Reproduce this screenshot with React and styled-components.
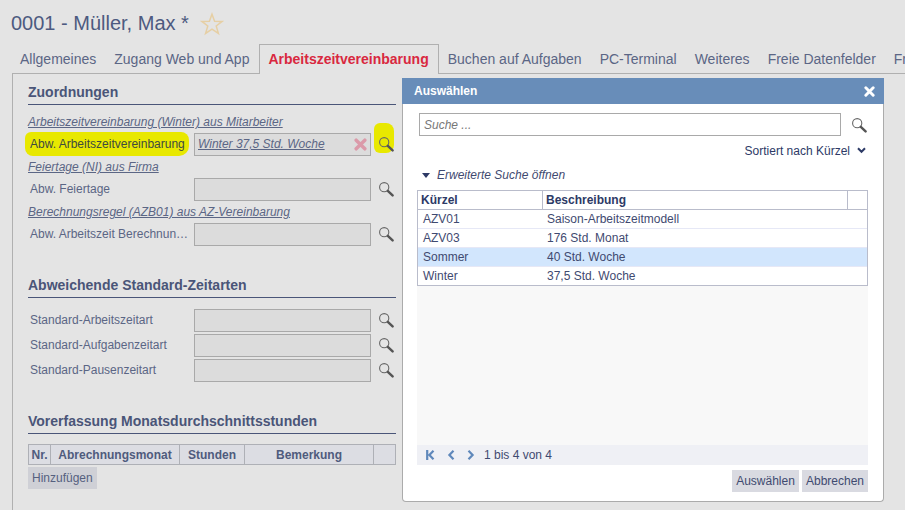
import styled, { createGlobalStyle } from "styled-components";

const tabs = [
  "Allgemeines",
  "Zugang Web und App",
  "Arbeitszeitvereinbarung",
  "Buchen auf Aufgaben",
  "PC-Terminal",
  "Weiteres",
  "Freie Datenfelder",
  "Freie Felder",
];

const results = [
  ["AZV01", "Saison-Arbeitszeitmodell"],
  ["AZV03", "176 Std. Monat"],
  ["Sommer", "40 Std. Woche"],
  ["Winter", "37,5 Std. Woche"],
];

const SearchIcon = () => (
  <svg width="16" height="16" viewBox="0 0 16 16">
    <circle cx="6.2" cy="6.2" r="4.6" fill="none" stroke="#666" strokeWidth="1.1" />
    <path d="M9.8 9.8 L14.6 14.4" stroke="#555" strokeWidth="2.4" strokeLinecap="round" />
  </svg>
);

const Cross = ({ color, size }) => (
  <svg width={size} height={size} viewBox="0 0 12 12">
    <path d="M2 2 L10 10 M10 2 L2 10" stroke={color} strokeWidth="3.2" strokeLinecap="round" />
  </svg>
);

const Chevron = ({ d, width = 8 }) => (
  <svg width={width} height="10" viewBox={`0 0 ${width} 10`}>
    <path d={d} fill="none" stroke="#5f88bb" strokeWidth="2.2" />
  </svg>
);

const Field = ({ label, highlight, value }) => (
  <Row>
    <Label $highlight={highlight}>
      {highlight && <LabelMark />}
      <LabelText>{label}</LabelText>
    </Label>
    <Input>
      {value && <InputValue>{value}</InputValue>}
      {value && <Cross color="#db9aa9" size={13} />}
    </Input>
    <Lookup>
      {highlight && <LookupMark />}
      <LookupIcon>
        <SearchIcon />
      </LookupIcon>
    </Lookup>
  </Row>
);

export default function App() {
  return (
    <>
      <GlobalStyle />
      <Page>
        <TitleRow>
          <Title>0001 - Müller, Max *</Title>
          <svg width="24" height="24" viewBox="0 0 24 24">
            <path
              d="M12 2.2 L14.6 9.2 L22.2 9.4 L16.2 14 L18.4 21.4 L12 17.1 L5.6 21.4 L7.8 14 L1.8 9.4 L9.4 9.2 Z"
              fill="none"
              stroke="#e6cfa4"
              strokeWidth="1.5"
            />
          </svg>
        </TitleRow>
        <Tabs>
          {tabs.map((tab, i) => (
            <Tab key={tab} $active={i === 2}>
              {tab}
            </Tab>
          ))}
        </Tabs>
        <Panel>
          <Section>
            <Heading>Zuordnungen</Heading>
            <Hint>Arbeitszeitvereinbarung (Winter) aus Mitarbeiter</Hint>
            <Field label="Abw. Arbeitszeitvereinbarung" highlight value="Winter 37,5 Std. Woche" />
            <Hint>Feiertage (NI) aus Firma</Hint>
            <Field label="Abw. Feiertage" />
            <Hint>Berechnungsregel (AZB01) aus AZ-Vereinbarung</Hint>
            <Field label="Abw. Arbeitszeit Berechnungsregel" />
          </Section>
          <Section>
            <Heading>Abweichende Standard-Zeitarten</Heading>
            <Rows>
              <Field label="Standard-Arbeitszeitart" />
              <Field label="Standard-Aufgabenzeitart" />
              <Field label="Standard-Pausenzeitart" />
            </Rows>
          </Section>
          <Section>
            <Heading>Vorerfassung Monatsdurchschnittsstunden</Heading>
            <MiniTable>
              <MiniHead>Nr.</MiniHead>
              <MiniHead>Abrechnungsmonat</MiniHead>
              <MiniHead>Stunden</MiniHead>
              <MiniHead>Bemerkung</MiniHead>
              <MiniHead />
            </MiniTable>
            <GreyButton>Hinzufügen</GreyButton>
          </Section>
        </Panel>

        <Dialog>
          <DialogHeader>
            <span>Auswählen</span>
            <Cross color="#fff" size={11} />
          </DialogHeader>
          <DialogBody>
            <SearchRow>
              <SearchBox>Suche ...</SearchBox>
              <SearchIcon />
            </SearchRow>
            <SortRow>
              Sortiert nach Kürzel
              <svg width="9" height="7" viewBox="0 0 9 7">
                <path d="M1 1.2 L4.5 4.8 L8 1.2" fill="none" stroke="#2d3a66" strokeWidth="2" />
              </svg>
            </SortRow>
            <ExpandRow>
              <Triangle />
              Erweiterte Suche öffnen
            </ExpandRow>
            <Results>
              <ResultHead>
                <ResultTitle>Kürzel</ResultTitle>
                <ResultTitle>Beschreibung</ResultTitle>
                <ResultTitle />
              </ResultHead>
              {results.map(([code, text]) => (
                <ResultRow key={code} $selected={code === "Sommer"}>
                  <span>{code}</span>
                  <span>{text}</span>
                </ResultRow>
              ))}
            </Results>
            <Empty />
            <Pager>
              <PagerIcons>
                <Chevron d="M1.2 0 V10 M7.5 0.8 L3.4 5 L7.5 9.2" width="9" />
                <Chevron d="M6.5 0.8 L2.4 5 L6.5 9.2" />
                <Chevron d="M1.5 0.8 L5.6 5 L1.5 9.2" />
              </PagerIcons>
              1 bis 4 von 4
            </Pager>
            <Actions>
              <ActionButton>Auswählen</ActionButton>
              <ActionButton>Abbrechen</ActionButton>
            </Actions>
          </DialogBody>
        </Dialog>
      </Page>
    </>
  );
}

const GlobalStyle = createGlobalStyle`
  html, body {
    margin: 0;
    height: 510px;
    overflow: hidden;
    background: #e4e4e4;
  }
  * {
    box-sizing: border-box;
  }
`;

const Page = styled.div`
  position: relative;
  width: 905px;
  height: 510px;
  overflow: hidden;
  background: #e4e4e4;
  color: #4a5578;
  font-family: "Liberation Sans", Arial, sans-serif;
  font-size: 12px;
`;

const TitleRow = styled.div`
  display: flex;
  align-items: center;
  gap: 11px;
  height: 44px;
  padding: 3px 0 0 11px;
`;

const Title = styled.div`
  font-size: 20px;
  color: #4d5a80;
`;

const Tabs = styled.div`
  display: flex;
  height: 30px;
  padding-left: 11px;
  white-space: nowrap;
`;

const Tab = styled.div`
  height: ${(p) => (p.$active ? "30px" : "29px")};
  padding: ${(p) => (p.$active ? "6px 9px 0 8px" : "7px 9px 0")};
  margin-left: ${(p) => (p.$active ? "1px" : "0")};
  font-size: 14px;
  font-weight: ${(p) => (p.$active ? 700 : 400)};
  color: ${(p) => (p.$active ? "#d9283f" : "#5b6685")};
  background: #e4e4e4;
  border: ${(p) => (p.$active ? "1px solid #b0b0b0" : "none")};
  border-bottom: none;
  position: relative;
  z-index: 1;
`;

const Panel = styled.div`
  margin-left: 12px;
  width: 900px;
  height: 440px;
  margin-top: -1px;
  padding: 9px 0 0 15px;
  border-left: 1px solid #b0b0b0;
  border-top: 1px solid #b0b0b0;
`;

const Section = styled.section`
  width: 368px;
  margin-bottom: 30px;
`;

const Heading = styled.h2`
  margin: 0 0 10px;
  height: 22px;
  padding-top: 1px;
  border-bottom: 1px solid #4a5578;
  font-size: 14px;
  font-weight: 700;
  color: #4a5578;
`;

const Hint = styled.div`
  height: 15px;
  line-height: 15px;
  margin-top: 4px;
  font-style: italic;
  text-decoration: underline;
  color: #5b6685;
`;

const Row = styled.div`
  display: flex;
  align-items: center;
  height: 23px;
  margin-top: 3px;
`;

const Rows = styled.div`
  display: flex;
  flex-direction: column;
  gap: 2px;
  padding-top: 1px;

  ${Row} {
    margin-top: 0;
  }
`;

const Label = styled.div`
  position: relative;
  width: 166px;
  padding: 0 0 2px 2px;
  white-space: nowrap;
  overflow: ${(p) => (p.$highlight ? "visible" : "hidden")};
  text-overflow: ellipsis;
  color: ${(p) => (p.$highlight ? "#3d4a40" : "#5b6685")};
`;

const LabelText = styled.span`
  position: relative;
`;

const LabelMark = styled.span`
  position: absolute;
  left: -3px;
  right: 5px;
  top: -5px;
  bottom: -3px;
  background: #e8e800;
  border-radius: 6px 8px 10px 8px;
`;

const Input = styled.div`
  display: flex;
  align-items: center;
  justify-content: space-between;
  width: 177px;
  height: 23px;
  padding: 0 3px 1px 3px;
  background: #dcdcdc;
  border: 1px solid #a9a9a9;
`;

const InputValue = styled.span`
  font-style: italic;
  text-decoration: underline;
  color: #5b6685;
`;

const Lookup = styled.div`
  position: relative;
  width: 25px;
  height: 23px;
  display: flex;
  align-items: center;
  padding: 0 0 2px 7px;
`;

const LookupIcon = styled.span`
  position: relative;
  display: flex;
`;

const LookupMark = styled.span`
  position: absolute;
  left: 3px;
  top: -10px;
  width: 20px;
  height: 30px;
  background: #e8e800;
  border-radius: 6px 8px 8px 6px;
`;

const MiniTable = styled.div`
  display: grid;
  grid-template-columns: 22px 129px 65px 129px 23px;
  height: 21px;
  background: #dcdde3;
  border: 1px solid #aeb0b6;
`;

const MiniHead = styled.div`
  display: flex;
  align-items: center;
  justify-content: center;
  font-weight: 700;
  color: #4f5b7d;
  border-right: 1px solid #aeb0b6;
  &:last-child {
    border-right: none;
  }
`;

const GreyButton = styled.div`
  display: flex;
  align-items: center;
  width: 69px;
  height: 22px;
  margin-top: 2px;
  padding-left: 4px;
  background: #cfd0d6;
  color: #55607f;
`;

const Dialog = styled.div`
  position: absolute;
  left: 402px;
  top: 78px;
  width: 482px;
  height: 424px;
  display: flex;
  flex-direction: column;
  background: #fff;
  border: 1px solid #ababab;
  border-top: none;
  border-radius: 0 0 4px 4px;
`;

const DialogHeader = styled.div`
  display: flex;
  align-items: center;
  justify-content: space-between;
  height: 26px;
  margin: 0 -1px;
  padding: 0 9px 0 12px;
  background: #688db9;
  color: #fff;
  font-weight: 700;
`;

const DialogBody = styled.div`
  flex: 1;
  display: flex;
  flex-direction: column;
  padding: 9px 15px 9px 14px;
`;

const SearchRow = styled.div`
  display: flex;
  align-items: center;
  gap: 10px;
  padding-left: 2px;
`;

const SearchBox = styled.div`
  display: flex;
  align-items: center;
  width: 422px;
  height: 23px;
  padding-left: 4px;
  border: 1px solid #a9a9a9;
  font-style: italic;
  color: #777;
`;

const SortRow = styled.div`
  display: flex;
  align-items: center;
  justify-content: flex-end;
  gap: 7px;
  height: 15px;
  margin-top: 7px;
  padding-right: 2px;
  color: #2d3a66;
`;

const ExpandRow = styled.div`
  display: flex;
  align-items: center;
  gap: 7px;
  height: 15px;
  margin-top: 9px;
  padding-left: 5px;
  font-style: italic;
  color: #3f4a70;
`;

const Triangle = styled.span`
  width: 0;
  height: 0;
  margin-top: 2px;
  border-left: 4.5px solid transparent;
  border-right: 4.5px solid transparent;
  border-top: 5px solid #2d3a66;
`;

const Results = styled.div`
  margin-top: 8px;
  border: 1px solid #b9bccb;
  color: #3f4a70;
`;

const ResultHead = styled.div`
  display: grid;
  grid-template-columns: 125px 305px 1fr;
  height: 19px;
  border-bottom: 1px solid #b9bccb;
`;

const ResultTitle = styled.div`
  padding: 2px 0 0 3px;
  font-weight: 700;
  color: #2d3a66;
  border-right: 1px solid #b9bccb;
  &:last-child {
    border-right: none;
  }
`;

const ResultRow = styled.div`
  display: grid;
  grid-template-columns: 124px 1fr;
  align-items: center;
  height: 19px;
  padding-left: 5px;
  background: ${(p) => (p.$selected ? "#d2e6fd" : "#fff")};
  border-bottom: 1px solid #e6e8f6;
  &:last-child {
    height: 18px;
    border-bottom: none;
  }
`;

const Empty = styled.div`
  flex: 1;
  background: #f8f8f8;
`;

const Pager = styled.div`
  display: flex;
  align-items: center;
  height: 20px;
  padding-left: 9px;
  background: #eff0f5;
  color: #3f4a70;
`;

const PagerIcons = styled.div`
  display: flex;
  align-items: center;
  gap: 12px;
  margin-right: 9px;
`;

const Actions = styled.div`
  display: grid;
  grid-template-columns: 67px 66px;
  justify-content: end;
  gap: 3px;
  margin-top: 5px;
`;

const ActionButton = styled.div`
  display: flex;
  align-items: center;
  justify-content: center;
  height: 22px;
  background: #d9dae1;
  color: #3f4a70;
  white-space: nowrap;
`;
